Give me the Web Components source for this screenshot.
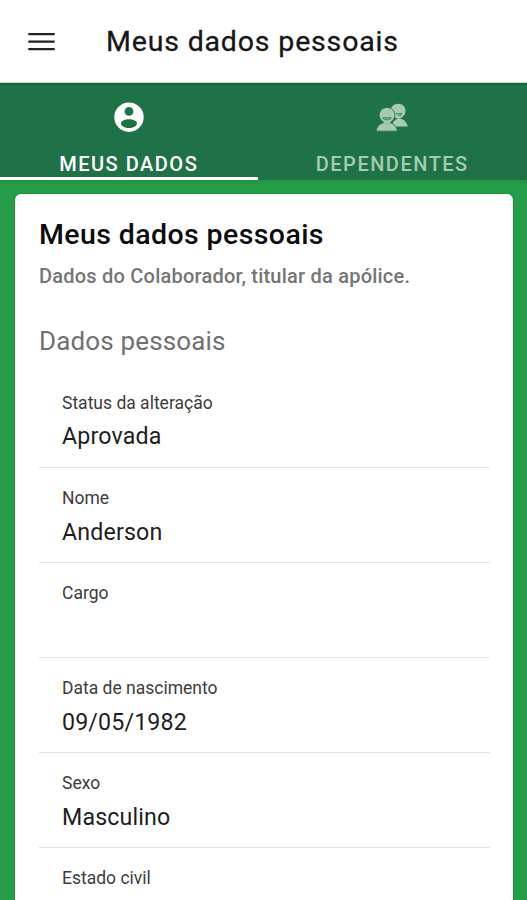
<!DOCTYPE html>
<html lang="pt-BR">
<head>
<meta charset="utf-8">
<title>Meus dados pessoais</title>
<style>
body {
    margin: 0;
    height: 900px;
    overflow: hidden;
    background: #269e49;
    font-family: Roboto, "Liberation Sans", sans-serif;
}
</style>
</head>
<body>
<app-page>
    <app-header slot="header">Meus dados pessoais</app-header>
    <tab-bar slot="tabs">
        <tab-item icon="account" active>MEUS DADOS</tab-item>
        <tab-item icon="people">DEPENDENTES</tab-item>
    </tab-bar>
    <profile-card>
        <span slot="title">Meus dados pessoais</span>
        <span slot="subtitle">Dados do Colaborador, titular da apólice.</span>
        <span slot="section">Dados pessoais</span>
        <data-field label="Status da alteração">Aprovada</data-field>
        <data-field label="Nome">Anderson</data-field>
        <data-field label="Cargo"></data-field>
        <data-field label="Data de nascimento">09/05/1982</data-field>
        <data-field label="Sexo">Masculino</data-field>
        <data-field label="Estado civil"></data-field>
    </profile-card>
</app-page>

<script>
class AppPage extends HTMLElement {
    constructor(){
        super();
        this.shadowDOM = this.attachShadow({mode: "open"});
        this.shadowDOM.innerHTML = `
        <style>
        :host {
            display: flex;
            flex-direction: column;
            height: 900px;
            overflow: hidden;
        }

        main {
            flex: 1;
            min-height: 0;
            padding: 14px 14px 0 15px;
            background: linear-gradient(#229443, #269e49 6px);
        }
        </style>

        <slot name="header"></slot>
        <slot name="tabs"></slot>
        <main><slot></slot></main>`;
    }
}

class AppHeader extends HTMLElement {
    constructor(){
        super();
        this.shadowDOM = this.attachShadow({mode: "open"});
        this.shadowDOM.innerHTML = `
        <style>
        :host {
            display: flex;
            align-items: center;
            flex: none;
            box-sizing: border-box;
            height: 83px;
            padding: 2px 0 0 28px;
            border-bottom: 1px solid #c3dccb;
            background: #fff;
        }

        svg {
            display: block;
            width: 27px;
            height: 20px;
            margin-right: 51px;
        }

        h1 {
            margin: 0;
            color: #161616;
            font-size: 28.5px;
            font-weight: 400;
            line-height: 34px;
            letter-spacing: 0.83px;
            white-space: nowrap;
            -webkit-text-stroke: 0.3px #161616;
        }
        </style>

        <svg viewBox="0 0 27 20"><path d="M.3 2.2h26.4M.3 9.7h26.4M.3 17.2h26.4" stroke="#222" stroke-width="2.3"/></svg>
        <h1><slot></slot></h1>`;
    }
}

class TabBar extends HTMLElement {
    constructor(){
        super();
        this.shadowDOM = this.attachShadow({mode: "open"});
        this.shadowDOM.innerHTML = `
        <style>
        :host {
            display: grid;
            grid-template-columns: 257.5px 1fr;
            flex: none;
            height: 97px;
            background: linear-gradient(#14632f, #1f7147 3px);
        }
        </style>

        <slot></slot>`;
    }
}

const ICONS = {
    account: `<path fill-rule="evenodd" d="M16 1.5a14.7 14.7 0 1 0 0 29.4a14.7 14.7 0 1 0 0-29.4zM16 6a4.4 4.4 0 1 1 0 8.8a4.4 4.4 0 1 1 0-8.8zM16 18.2c4.500 0 8 1.8 8 4c0 2.8-3.8 4.8-8 4.8s-8-2-8-4.8c0-2.2 3.5-4 8-4z"/>`,
    people: `<path d="M22 2.8c4.6 0 7.5 3.1 7.5 7.2c0 3.9-3 7.3-7.1 7.3s-7.900-3.300-7.900-7.300s3.300-7.200 7.500-7.200z"/>
        <path d="M15.500 25.500c.8-4.400 3.300-6.800 6.900-8.500c4.900.8 8.400 3.700 9.300 8.500z"/>
        <path class="line" d="M19.500 12.800h6.500c-.8 1.200-2 1.800-3.700 1.800"/>
        <path class="edge" d="M11 6.500c4.700 0 7.800 3.400 7.800 7.500s-3.400 7.900-7.800 7.900s-7.700-3.800-7.700-7.900s3.200-7.500 7.700-7.500z"/>
        <path class="edge" d="M.1 30.200c.7-4.600 3.700-7.600 7.500-8.400c2.200 1.200 4.600 1.200 6.800 0c3.700 1 6.300 3.800 7.100 8.400z"/>
        <path d="M7.600 21h6.800v1.800h-6.800z"/>
        <path class="line" d="M6.800 16.800h8.400c-.8 1.500-2.300 2-4.200 2s-3.500-.5-4.200-2z"/>`
};

class TabItem extends HTMLElement {
    constructor(){
        super();
        this.shadowDOM = this.attachShadow({mode: "open"});
    }

    connectedCallback(){
        this.shadowDOM.innerHTML = `
        <style>
        :host {
            display: flex;
            flex-direction: column;
            align-items: center;
            box-sizing: border-box;
            padding-top: 18px;
            color: #a5cbb0;
            border-bottom: 3px solid transparent;
        }

        :host([active]) {
            color: #fff;
            border-bottom-color: #fff;
        }

        svg {
            display: block;
            width: 32px;
            height: 32px;
            overflow: visible;
            fill: currentColor;
        }

        .edge {
            stroke: #1f7147;
            stroke-width: 0.8;
        }

        .line {
            fill: none;
            stroke: #1f7147;
            stroke-width: 0.9;
        }

        span {
            margin-top: 19px;
            font-size: 20px;
            font-weight: 500;
            line-height: 24px;
            letter-spacing: 1.5px;
            white-space: nowrap;
        }
        </style>

        <svg viewBox="0 0 32 32">${ICONS[this.getAttribute("icon")]}</svg>
        <span><slot></slot></span>`;
    }
}

class ProfileCard extends HTMLElement {
    constructor(){
        super();
        this.shadowDOM = this.attachShadow({mode: "open"});
        this.shadowDOM.innerHTML = `
        <style>
        :host {
            display: block;
            box-sizing: border-box;
            height: 740px;
            padding: 24px 23.5px 0 24px;
            border-radius: 6px 6px 0 0;
            background: #fff;
            box-shadow: 0 0 2px #078321;
        }

        h2, h3, p {
            margin: 0;
            white-space: nowrap;
        }

        h2 {
            color: #0c0c0c;
            font-size: 28.5px;
            font-weight: 500;
            line-height: 34px;
            letter-spacing: 0.4px;
        }

        p {
            margin-top: 12px;
            color: #757575;
            font-size: 20px;
            font-weight: 500;
            line-height: 24px;
            letter-spacing: 0.22px;
        }

        h3 {
            margin: 37px 0 15.5px;
            color: #707070;
            font-size: 26px;
            font-weight: 400;
            line-height: 32px;
            letter-spacing: 0.15px;
        }
        </style>

        <h2><slot name="title"></slot></h2>
        <p><slot name="subtitle"></slot></p>
        <h3><slot name="section"></slot></h3>
        <slot></slot>`;
    }
}

class DataField extends HTMLElement {
    constructor(){
        super();
        this.shadowDOM = this.attachShadow({mode: "open"});
    }

    connectedCallback(){
        this.shadowDOM.innerHTML = `
        <style>
        :host {
            display: block;
            box-sizing: border-box;
            height: 95.1px;
            padding: 19.4px 23px 0;
            border-bottom: 1.5px solid #e2e2e2;
            white-space: nowrap;
        }

        .label {
            color: #3c3c3c;
            font-size: 17.5px;
            line-height: 22px;
        }

        .value {
            margin-top: 8.6px;
            color: #1e1e1e;
            font-size: 23.2px;
            line-height: 28px;
            letter-spacing: 0.15px;
        }
        </style>

        <div class="label">${this.getAttribute("label")}</div>
        <div class="value"><slot></slot></div>`;
    }
}

customElements.define('app-page', AppPage);
customElements.define('app-header', AppHeader);
customElements.define('tab-bar', TabBar);
customElements.define('tab-item', TabItem);
customElements.define('profile-card', ProfileCard);
customElements.define('data-field', DataField);
</script>
</body>
</html>
